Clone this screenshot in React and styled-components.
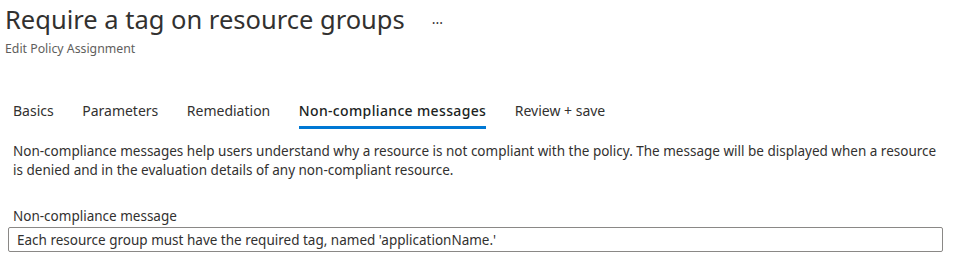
import React from "react";
import styled, { createGlobalStyle } from "styled-components";

const GlobalStyle = createGlobalStyle`
  body {
    margin: 0;
    background: #ffffff;
    font-family: "Segoe UI", "Noto Sans", sans-serif;
    color: #323130;
  }
`;

const Page = styled.div`
  width: 957px;
  height: 269px;
  overflow: hidden;
  background: #ffffff;
`;

const Header = styled.div`
  padding: 2px 0 0 5px;
`;

const TitleRow = styled.div`
  display: flex;
  align-items: center;
  gap: 27px;
`;

const Title = styled.h1`
  margin: 0;
  font-size: 25.5px;
  font-weight: 400;
  line-height: 34px;
  color: #323130;
`;

const More = styled.button`
  border: none;
  background: none;
  padding: 0;
  font-family: inherit;
  font-size: 14px;
  color: #323130;
  cursor: pointer;
  line-height: 16px;
  margin-top: 8px;
`;

const Subtitle = styled.div`
  font-size: 12.3px;
  line-height: 16px;
  color: #605e5c;
  margin-top: 5px;
`;

const Tabs = styled.div`
  display: flex;
  gap: 28.5px;
  margin: 44px 0 0 13px;
`;

const Tab = styled.div`
  font-size: 14px;
  line-height: 20px;
  padding-bottom: 5px;
  color: ${(p) => (p.$active ? "#201f1e" : "#323130")};
  font-weight: ${(p) => (p.$active ? 500 : 400)};
  letter-spacing: ${(p) => (p.$active ? "0.35px" : "0")};
  border-bottom: 3px solid ${(p) => (p.$active ? "#0078d4" : "transparent")};
  cursor: pointer;
`;

const Content = styled.div`
  padding: 13px 20px 0 13px;
`;

const Description = styled.p`
  margin: 0;
  font-size: 13.5px;
  line-height: 19px;
`;

const Label = styled.label`
  display: block;
  margin-top: 27px;
  font-size: 13.5px;
  line-height: 18px;
`;

const Input = styled.input`
  display: block;
  box-sizing: border-box;
  width: 935px;
  height: 25px;
  margin: 2px 0 0 -5px;
  padding: 0 8px;
  border: 1px solid #8a8886;
  border-radius: 2px;
  font-family: inherit;
  font-size: 13.5px;
  color: #323130;
  outline: none;
`;

const tabs = ["Basics", "Parameters", "Remediation", "Non-compliance messages", "Review + save"];

export default function App() {
  return (
    <Page>
      <GlobalStyle />
      <Header>
        <TitleRow>
          <Title>Require a tag on resource groups</Title>
          <More>···</More>
        </TitleRow>
        <Subtitle>Edit Policy Assignment</Subtitle>
      </Header>
      <Tabs>
        {tabs.map((t) => (
          <Tab key={t} $active={t === "Non-compliance messages"}>
            {t}
          </Tab>
        ))}
      </Tabs>
      <Content>
        <Description>
          Non-compliance messages help users understand why a resource is not compliant with the policy. The message
          will be displayed when a resource is denied and in the evaluation details of any non-compliant resource.
        </Description>
        <Label htmlFor="msg">Non-compliance message</Label>
        <Input id="msg" defaultValue="Each resource group must have the required tag, named 'applicationName.'" />
      </Content>
    </Page>
  );
}
